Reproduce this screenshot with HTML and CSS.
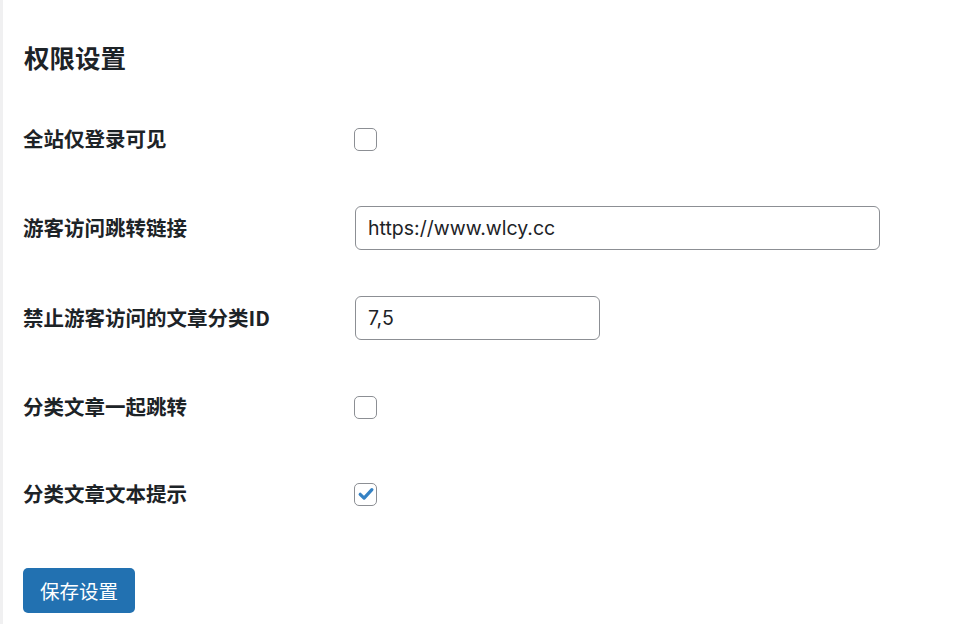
FILE: index.html
```html
<!DOCTYPE html>
<html lang="zh-CN">
<head>
<meta charset="utf-8">
<title>权限设置</title>
<link rel="stylesheet" href="styles.css">
</head>
<body>
<div class="page">
  <h2 class="title">权限设置</h2>
  <div class="form">
    <div class="row r1">
      <div class="label">全站仅登录可见</div>
      <div class="field"><span class="checkbox"></span></div>
    </div>
    <div class="row r2">
      <div class="label">游客访问跳转链接</div>
      <div class="field"><input class="text wide" type="text" value="https://www.wlcy.cc"></div>
    </div>
    <div class="row r3">
      <div class="label">禁止游客访问的文章分类ID</div>
      <div class="field"><input class="text short" type="text" value="7,5"></div>
    </div>
    <div class="row r4">
      <div class="label">分类文章一起跳转</div>
      <div class="field"><span class="checkbox"></span></div>
    </div>
    <div class="row r5">
      <div class="label">分类文章文本提示</div>
      <div class="field"><span class="checkbox checked"><svg viewBox="0 0 20 20" width="20" height="20"><path d="M4.2 10.3 L8.1 14.1 L15.9 5.6" fill="none" stroke="#3582c4" stroke-width="3.2" stroke-linecap="round" stroke-linejoin="round"/></svg></span></div>
    </div>
  </div>
  <button class="save" type="button">保存设置</button>
</div>
</body>
</html>
```
FILE: styles.css
```css
html, body {
  margin: 0;
  padding: 0;
  background: #ffffff;
}
body {
  font-family: "Noto Sans CJK SC", "Noto Sans", sans-serif;
  color: #1d2327;
}
.page {
  min-height: 624px;
  box-sizing: border-box;
  border-left: 3px solid #f0f0f1;
  padding: 41px 0 0 20px;
}
.title {
  margin: 0 0 0 1px;
  font-size: 25.5px;
  line-height: 32px;
  font-weight: 700;
  color: #1d2327;
}
.form {
  margin-top: 22px;
  display: flex;
  flex-direction: column;
}
.row {
  display: flex;
  align-items: center;
}
.r1 { height: 88px; }
.r2 { height: 90px; }
.r3 { height: 90px; }
.r4 { height: 88px; }
.r5 { height: 86px; }
.label {
  width: 331px;
  flex: none;
  font-size: 20.5px;
  font-weight: 700;
  line-height: 28px;
  margin-top: -2px;
}
.field {
  display: flex;
  align-items: center;
}
.checkbox {
  width: 23px;
  height: 23px;
  box-sizing: border-box;
  border: 1.5px solid #8c8f94;
  border-radius: 5px;
  background: #fff;
  display: flex;
  align-items: center;
  justify-content: center;
}
.checkbox svg {
  display: block;
}
.text {
  box-sizing: border-box;
  height: 44px;
  border: 1.5px solid #8c8f94;
  border-radius: 6px;
  padding: 0 12px;
  margin-left: 1px;
  font-family: "Inter", "Noto Sans", sans-serif;
  font-size: 19.5px;
  color: #1d2327;
  background: #fff;
  outline: none;
}
.wide { width: 525px; }
.short { width: 245px; }
.save {
  margin-top: 31px;
  margin-left: 0;
  height: 45px;
  padding: 0 17px;
  border: none;
  border-radius: 5px;
  background: #2271b1;
  color: #fff;
  font-family: "Noto Sans CJK SC", sans-serif;
  font-size: 19.5px;
  line-height: 45px;
  cursor: pointer;
}
```
